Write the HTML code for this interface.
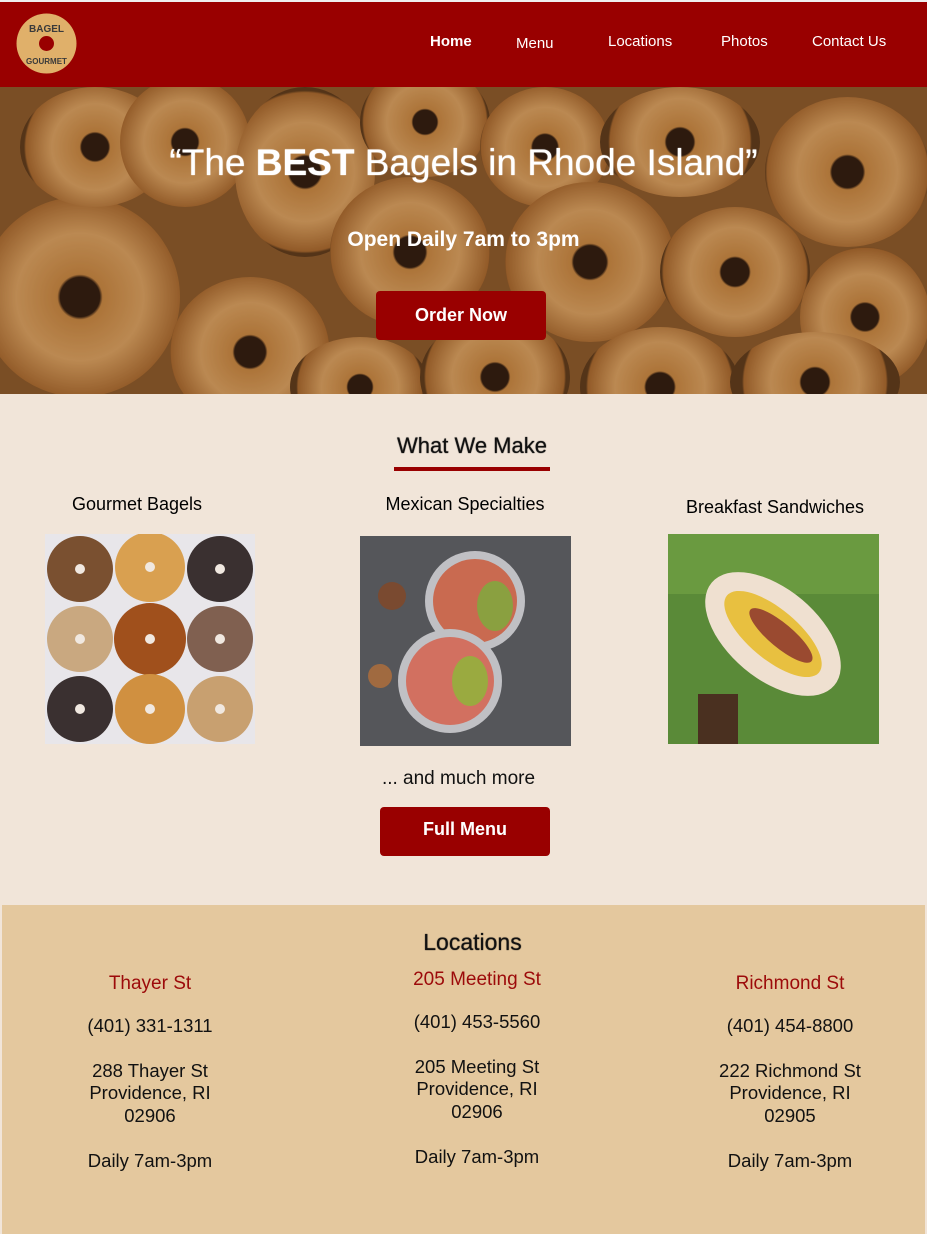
<!DOCTYPE html>
<html><head><style>
*{margin:0;padding:0;box-sizing:border-box}
body{width:927px;height:1234px;background:#f1e5d9;font-family:"Liberation Sans",sans-serif;position:relative;overflow:hidden}
.a{position:absolute}
.c{text-align:center}
nav{position:absolute;left:0;top:0;width:927px;height:87px;background:#990000;border-top:2px solid #eee}
nav span{position:absolute;top:31px;color:#fff;font-size:15px}
.hero{position:absolute;left:0;top:87px;width:927px;height:307px;background:#8a5a2c;overflow:hidden}
.b{position:absolute;border-radius:50%;background:radial-gradient(circle,#2a1a10 0 14%,#c98a45 16%,#dba464 45%,#a86a30 72%,#5a3a1c 74%)}
.btn{position:absolute;background:#990000;color:#fff;font-weight:bold;font-size:18px;border-radius:4px;text-align:center}
.loc{position:absolute;left:2px;top:905px;width:923px;height:329px;background:#e4c89e}
.col{position:absolute;width:260px;text-align:center;font-size:18.5px;color:#111;line-height:22.5px}
.col h3{color:#9c0a0a;font-weight:normal;font-size:19px;margin-bottom:19px}
</style></head><body>
<nav>
<svg class="a" style="left:15px;top:10px" width="63" height="63" viewBox="0 0 63 63"><circle cx="31.5" cy="31.5" r="30" fill="#e0b06a"/><circle cx="31.5" cy="31.5" r="7.5" fill="#990000"/>
<text x="31.5" y="20" font-size="10" font-weight="bold" fill="#3a3a3a" text-anchor="middle" font-family="Liberation Sans">BAGEL</text>
<text x="31.5" y="52" font-size="8" font-weight="bold" fill="#3a3a3a" text-anchor="middle" font-family="Liberation Sans">GOURMET</text></svg>
<span style="left:430px;font-weight:bold">Home</span>
<span style="left:516px;top:33px">Menu</span>
<span style="left:608px">Locations</span>
<span style="left:721px">Photos</span>
<span style="left:812px">Contact Us</span>
</nav>
<div class="hero">
<div class="b" style="left:-20px;top:110px;width:200px;height:200px"></div>
<div class="b" style="left:20px;top:0;width:150px;height:120px"></div>
<div class="b" style="left:170px;top:190px;width:160px;height:150px"></div>
<div class="b" style="left:120px;top:-10px;width:130px;height:130px"></div>
<div class="b" style="left:235px;top:0;width:140px;height:170px"></div>
<div class="b" style="left:330px;top:90px;width:160px;height:150px"></div>
<div class="b" style="left:360px;top:-20px;width:130px;height:110px"></div>
<div class="b" style="left:480px;top:0;width:130px;height:120px"></div>
<div class="b" style="left:505px;top:95px;width:170px;height:160px"></div>
<div class="b" style="left:600px;top:0;width:160px;height:110px"></div>
<div class="b" style="left:660px;top:120px;width:150px;height:130px"></div>
<div class="b" style="left:765px;top:10px;width:165px;height:150px"></div>
<div class="b" style="left:800px;top:160px;width:130px;height:140px"></div>
<div class="b" style="left:580px;top:240px;width:160px;height:120px"></div>
<div class="b" style="left:730px;top:245px;width:170px;height:100px"></div>
<div class="b" style="left:290px;top:250px;width:140px;height:100px"></div>
<div class="b" style="left:420px;top:230px;width:150px;height:120px"></div>
<div class="a" style="left:0;top:0;width:927px;height:307px;background:rgba(60,30,10,.2)"></div>
<div class="a c" style="left:0;top:55px;width:927px;color:#fff;font-size:37px;text-shadow:0 0 1px #fff">“The <b>BEST</b> Bagels in Rhode Island”</div>
<div class="a c" style="left:0;top:141px;width:927px;color:#fff;font-size:21px;font-weight:bold">Open Daily 7am to 3pm</div>
<div class="btn" style="left:376px;top:204px;width:170px;height:49px;line-height:49px">Order Now</div>
</div>
<div class="a c" style="left:0;top:433px;width:944px;font-size:22px;color:#111;text-shadow:0 0 1px #111">What We Make</div>
<div class="a" style="left:394px;top:467px;width:156px;height:4px;background:#990000"></div>
<div class="a c" style="left:32px;top:494px;width:210px;font-size:18px">Gourmet Bagels</div>
<div class="a c" style="left:345px;top:494px;width:240px;font-size:18px">Mexican Specialties</div>
<div class="a c" style="left:655px;top:497px;width:240px;font-size:18px">Breakfast Sandwiches</div>
<svg class="a" style="left:45px;top:534px" width="210" height="210"><rect width="210" height="210" fill="#e8e6ea"/>
<g><circle cx="35" cy="35" r="33" fill="#7a5030"/><circle cx="105" cy="33" r="35" fill="#d9a050"/><circle cx="175" cy="35" r="33" fill="#3a3030"/>
<circle cx="35" cy="105" r="33" fill="#c9a880"/><circle cx="105" cy="105" r="36" fill="#a0501c"/><circle cx="175" cy="105" r="33" fill="#806050"/>
<circle cx="35" cy="175" r="33" fill="#3a3030"/><circle cx="105" cy="175" r="35" fill="#d09040"/><circle cx="175" cy="175" r="33" fill="#c8a070"/></g>
<g fill="#f0e8e0"><circle cx="35" cy="35" r="5"/><circle cx="105" cy="33" r="5"/><circle cx="175" cy="35" r="5"/><circle cx="35" cy="105" r="5"/><circle cx="105" cy="105" r="5"/><circle cx="175" cy="105" r="5"/><circle cx="35" cy="175" r="5"/><circle cx="105" cy="175" r="5"/><circle cx="175" cy="175" r="5"/></g></svg>
<svg class="a" style="left:360px;top:536px" width="211" height="210"><rect width="211" height="210" fill="#55565a"/>
<ellipse cx="115" cy="65" rx="50" ry="50" fill="#c0c0c4"/><ellipse cx="115" cy="65" rx="42" ry="42" fill="#c96a50"/><ellipse cx="135" cy="70" rx="18" ry="25" fill="#8aa040"/>
<ellipse cx="90" cy="145" rx="52" ry="52" fill="#c0c0c4"/><ellipse cx="90" cy="145" rx="44" ry="44" fill="#d27060"/><ellipse cx="110" cy="145" rx="18" ry="25" fill="#9aaa40"/>
<circle cx="32" cy="60" r="14" fill="#7a4a30"/><circle cx="20" cy="140" r="12" fill="#a06a40"/></svg>
<svg class="a" style="left:668px;top:534px" width="211" height="210"><rect width="211" height="210" fill="#5a8a38"/><rect width="211" height="60" fill="#6a9a40"/>
<ellipse cx="105" cy="100" rx="80" ry="45" transform="rotate(40 105 100)" fill="#efe0d0"/><ellipse cx="105" cy="100" rx="60" ry="25" transform="rotate(40 105 100)" fill="#e8c040"/><ellipse cx="112" cy="96" rx="40" ry="12" transform="rotate(40 105 100)" fill="#9a4a30"/><rect x="30" y="160" width="40" height="50" fill="#4a3020"/></svg>
<div class="a c" style="left:0;top:768px;width:917px;font-size:19px;color:#111">... and much more</div>
<div class="btn" style="left:380px;top:807px;width:170px;height:49px;line-height:45px">Full Menu</div>
<div class="loc">
<div class="a c" style="left:0;top:24px;width:941px;font-size:23px;color:#111;text-shadow:0 0 1px #111">Locations</div>
<div class="col" style="left:18px;top:68px"><h3>Thayer St</h3>(401) 331-1311<br><br>288 Thayer St<br>Providence, RI<br>02906<br><br>Daily 7am-3pm</div>
<div class="col" style="left:345px;top:64px"><h3>205 Meeting St</h3>(401) 453-5560<br><br>205 Meeting St<br>Providence, RI<br>02906<br><br>Daily 7am-3pm</div>
<div class="col" style="left:658px;top:68px"><h3>Richmond St</h3>(401) 454-8800<br><br>222 Richmond St<br>Providence, RI<br>02905<br><br>Daily 7am-3pm</div>
</div>
</body></html>
